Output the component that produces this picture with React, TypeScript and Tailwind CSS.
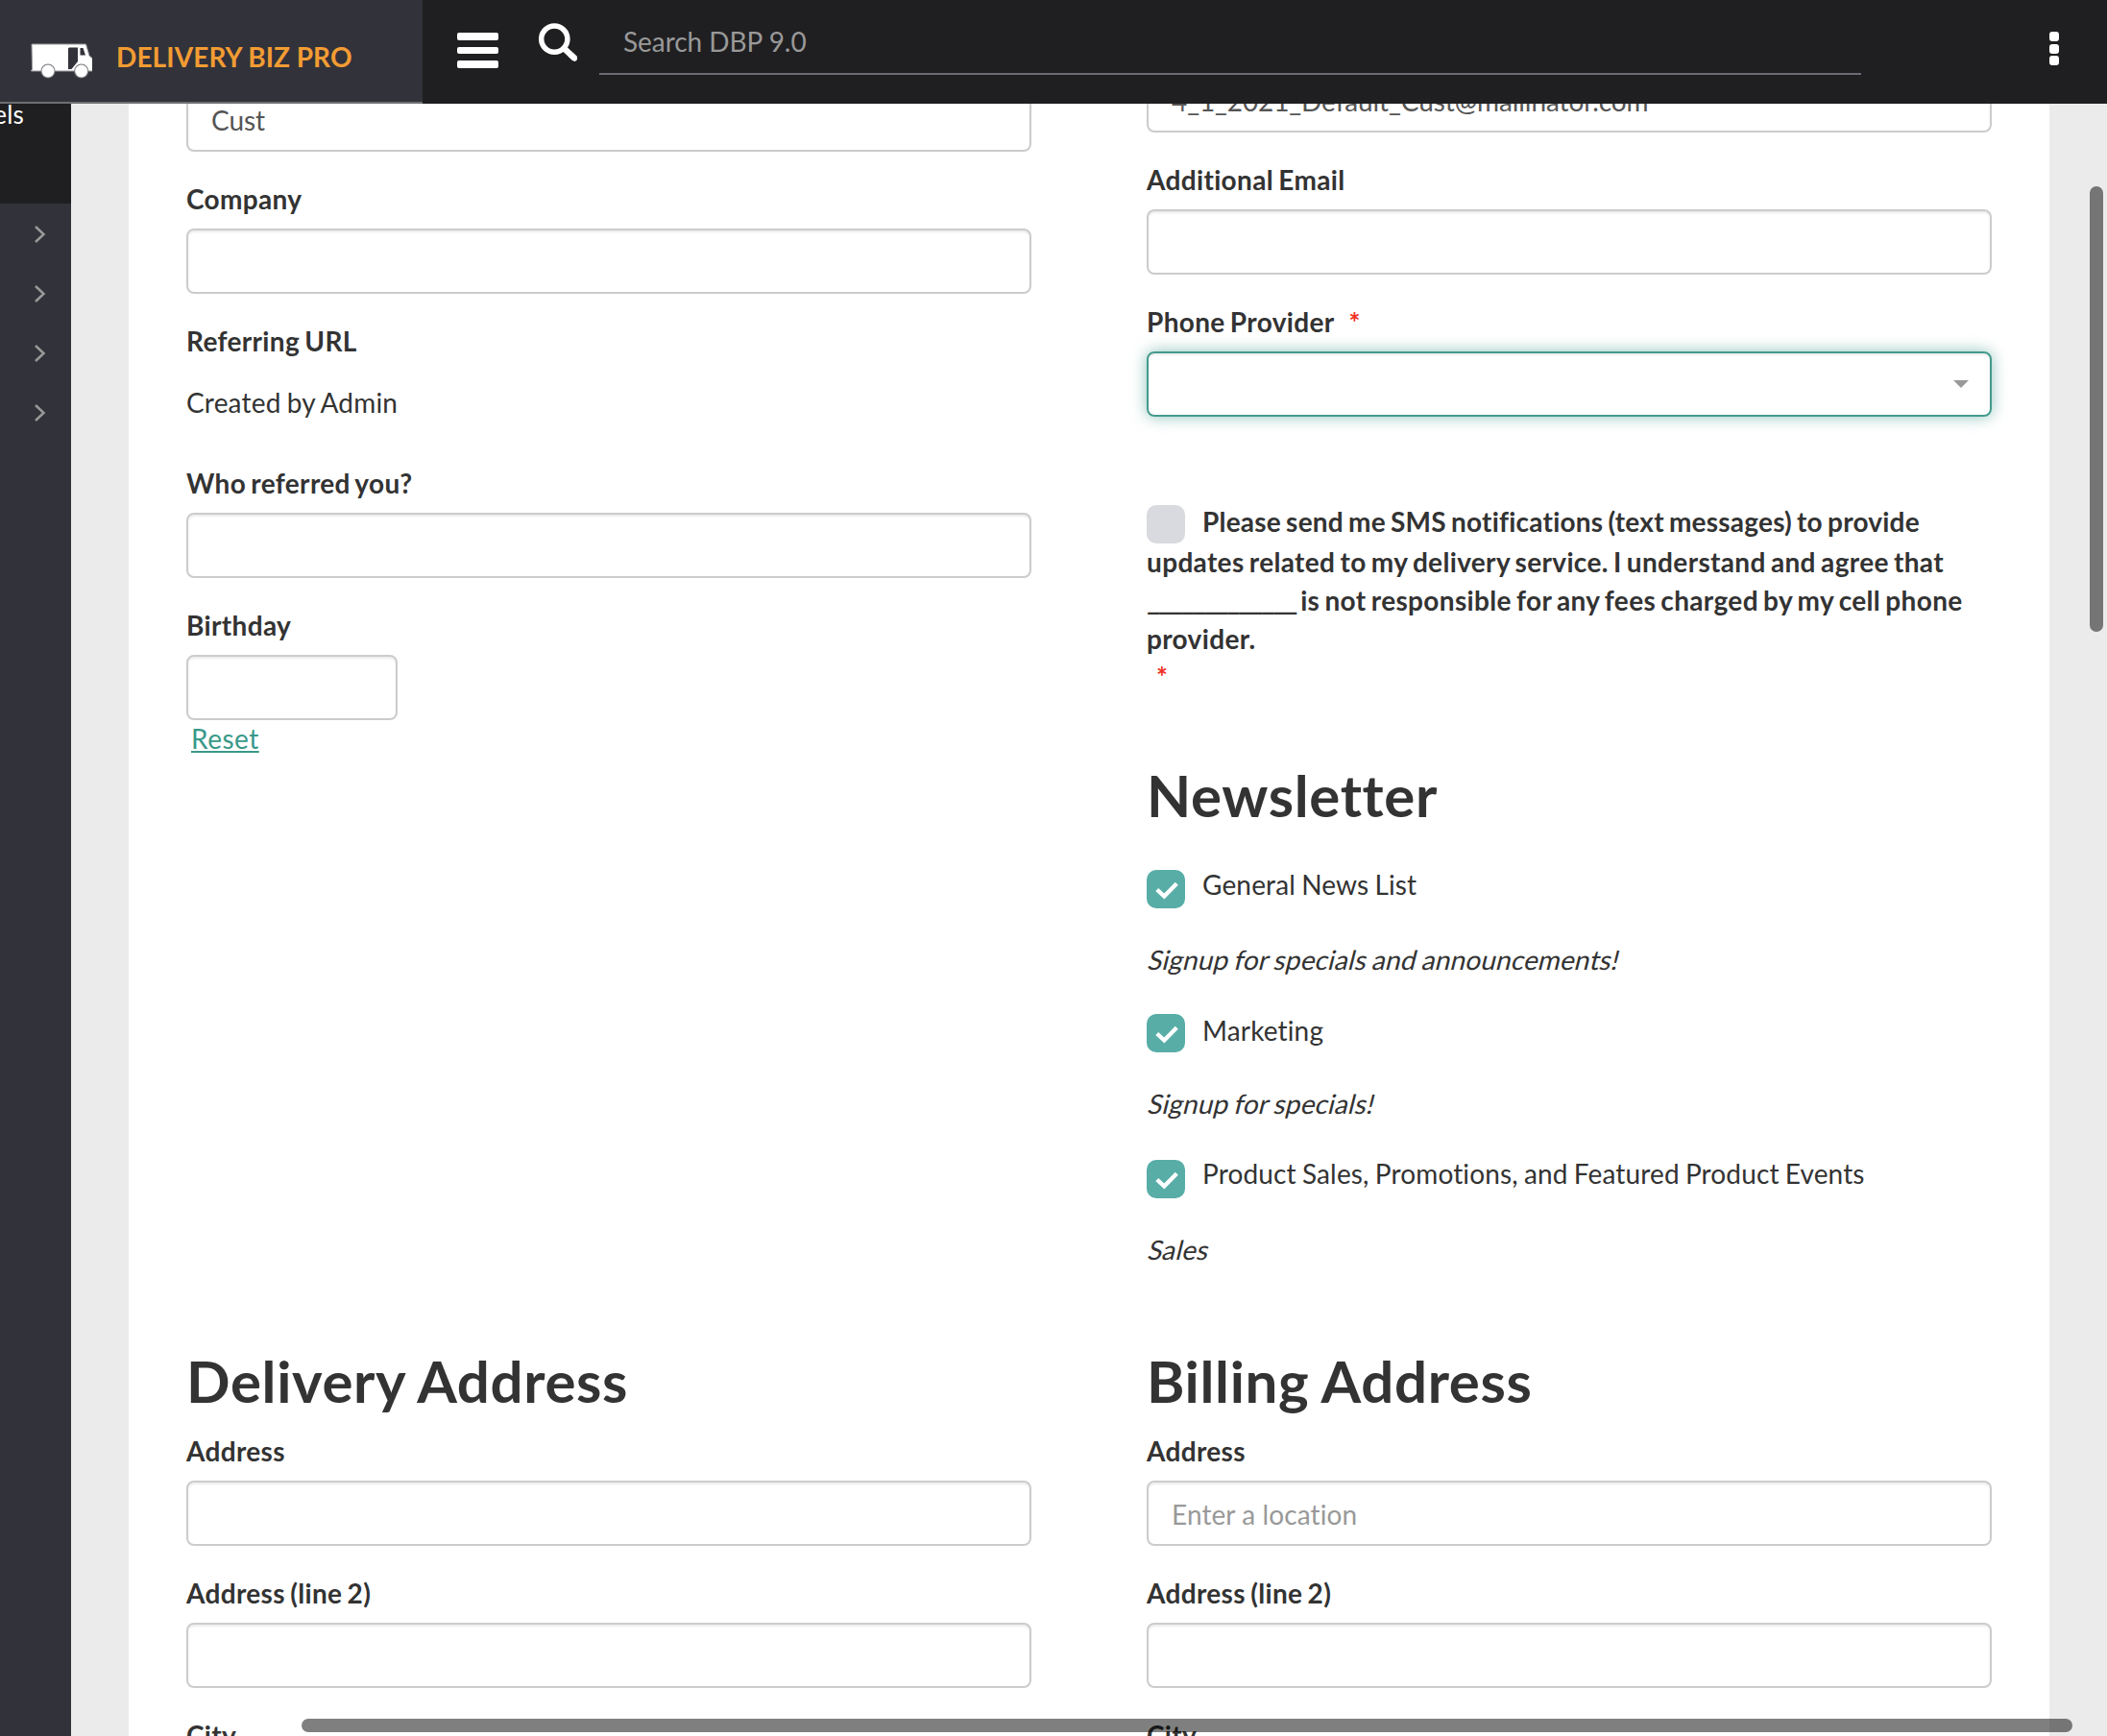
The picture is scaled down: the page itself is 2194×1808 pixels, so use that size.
import React from "react";

const inputBase =
  "block h-[68px] rounded-lg border-2 border-[#ccc] bg-white px-6 pt-[2px] text-[28px] leading-10 text-[#555] placeholder-[#999] shadow-[inset_0_2px_2px_rgba(0,0,0,0.075)] outline-none";

const bold = "font-bold tracking-[0.34px] [word-spacing:-1.9px]";

function Field({ label, value, placeholder, required, width = "w-full", children }: {
  label?: string; value?: string; placeholder?: string; required?: boolean; width?: string; children?: React.ReactNode;
}) {
  return (
    <div className="mb-[30px]">
      {label && (
        <label className={`mb-[10px] block h-10 leading-[38px] ${bold}`}>
          {label}
          {required && <span className="ml-[15px] text-[#f03024]">*</span>}
        </label>
      )}
      {children ?? (
        <input
          className={`${inputBase} ${width} ${value ? "tracking-[-0.1px]" : "tracking-[0.1px]"}`}
          defaultValue={value}
          placeholder={placeholder}
        />
      )}
    </div>
  );
}

function Box({ checked }: { checked?: boolean }) {
  return (
    <span className={`flex size-10 shrink-0 items-center justify-center rounded-[10px] ${checked ? "bg-[#58ada7]" : "bg-[#d9dadf]"}`}>
      {checked && (
        <svg className="size-10" viewBox="0 0 40 40" fill="none" stroke="#fff" strokeWidth="4.4">
          <path d="M10.8 20.5 L18.3 27.5 L31.3 14.3" />
        </svg>
      )}
    </span>
  );
}

function Subscription({ title, note, gap, lift }: { title: string; note: string; gap: string; lift: string }) {
  return (
    <div className={gap}>
      <div className="flex h-10 gap-[18px]">
        <Box checked />
        <span className={`tracking-[0.15px] ${lift}`}>{title}</span>
      </div>
      <p className="mt-[33px] h-[41px]">
        <span className="inline-block origin-[0_30px] -skew-x-[14deg] tracking-[0.12px]">{note}</span>
      </p>
    </div>
  );
}

function Heading({ children }: { children: React.ReactNode }) {
  return <h2 className="h-[66px] text-[60px] leading-[64px] font-bold tracking-[0.65px] [word-spacing:-1px]">{children}</h2>;
}

function Truck() {
  return (
    <svg className="h-[38px] w-16" viewBox="0 0 64 38">
      <path fill="#fff" stroke="#9a9aa0" strokeWidth="1" d="M1 1H57.5L61 13L64.5 16V29H0.5L1.5 27Z" />
      <path fill="#32323a" d="M39 5.5L40 4.5H49V19L42.500 27H39ZM51.500 5H54.500L57 12.500H51.500Z" />
      <circle cx="18" cy="29" r="7.6" fill="#77777d" />
      <circle cx="52.700" cy="29" r="7.6" fill="#77777d" />
      <circle cx="18" cy="29" r="6.5" fill="#fff" />
      <circle cx="52.700" cy="29" r="6.500" fill="#fff" />
    </svg>
  );
}

export default function App() {
  return (
    <div className="relative flex h-[1808px] w-[2194px] flex-col overflow-hidden bg-[#ebebeb] font-['Lato',sans-serif] text-[28px] leading-10 tracking-[0.2px] text-[#333] [font-variant-ligatures:none] [word-spacing:-1.2px]">
      <header className="z-10 flex h-[108px] shrink-0 bg-[#1f1f21]">
        <div className="flex w-[440px] items-start border-b-2 border-[#6f6f73] bg-[#32323a] pl-8">
          <div className="mt-[45px]"><Truck /></div>
          <span className="mt-[39px] ml-[25px] font-bold tracking-[0.1px] whitespace-nowrap text-[#f29c33] [word-spacing:-0.4px]">DELIVERY BIZ PRO</span>
        </div>
        <div className="mt-[34px] ml-9 flex w-[43px] flex-col gap-[7px]">
          <i className="h-[7.5px] rounded-[2px] bg-white" />
          <i className="h-[7.5px] rounded-[2px] bg-white" />
          <i className="h-[7.5px] rounded-[2px] bg-white" />
        </div>
        <svg className="mt-6 ml-[42px] h-10 w-10" viewBox="0 0 40 40" fill="none" stroke="#fff">
          <circle cx="16.3" cy="16.6" r="13.6" strokeWidth="5.5" />
          <path d="M26.500 26.500L37.500 37" strokeWidth="6.4" />
          <path d="M34 33.500L37.300 36.700" strokeWidth="6" strokeLinecap="round" />
        </svg>
        <input
          className="mt-[10px] ml-[23px] h-[68px] w-[1314px] border-b-2 border-[#6a6a74] bg-transparent px-[25px] text-[28px] tracking-[-0.05px] text-white placeholder-[#999] outline-none"
          placeholder="Search DBP 9.0"
        />
        <div className="mt-[33px] ml-[196px] flex flex-col gap-[2.5px]">
          <i className="size-[10px] rounded-[3px] bg-white" />
          <i className="size-[10px] rounded-[3px] bg-white" />
          <i className="size-[10px] rounded-[3px] bg-white" />
        </div>
      </header>

      <div className="flex h-[1700px]">
        <aside className="w-[74px] shrink-0 overflow-hidden bg-[#32323a]">
          <div className="flex h-[104px] justify-end bg-[#1f1f21] pr-[49px] text-[26px] leading-[22px] text-white">
            <span>Labels</span>
          </div>
          {[0, 1, 2, 3].map((i) => (
            <div key={i} className="flex h-[62px] items-center pt-[2px] pl-[35px]">
              <svg className="h-[18px] w-[14px]" viewBox="0 0 14 18" fill="none" stroke="#999" strokeWidth="2.5">
                <path d="M2 1L10.500 9L2 17" />
              </svg>
            </div>
          ))}
        </aside>

        <main className="ml-[60px] flex h-full w-[2000px] flex-col overflow-hidden bg-white px-[60px]">
          <div className="flex h-[1298px] shrink-0 gap-[120px]">
            <section className="-mt-[18px] w-[880px]">
              <Field value="Cust" />
              <Field label="Company" />
              <Field label="Referring URL">
                <p className="h-[68px] pt-[13px]">Created by Admin</p>
              </Field>
              <Field label="Who referred you?" />
              <Field label="Birthday" width="w-[220px]" />
              <a className="-mt-[31px] ml-[5px] block tracking-[0.5px] text-[#399889] underline decoration-2 underline-offset-2">Reset</a>
            </section>
            <section className="-mt-[38px] w-[880px]">
              <Field value="4_1_2021_Default_Cust@mailinator.com" />
              <Field label="Additional Email" />
              <Field label="Phone Provider" required>
                <div className="flex h-[68px] items-center justify-end rounded-lg border-2 border-[#439a8d] pr-[22px] shadow-[inset_0_2px_2px_rgba(0,0,0,0.075),0_0_16px_rgba(67,154,141,0.6)]">
                  <svg className="h-2 w-4" viewBox="0 0 16 8"><path d="M0 0H16L8 8Z" fill="#999" /></svg>
                </div>
              </Field>
              <div className={`mt-[92px] h-[150px] ${bold}`}>
                <div className="flex h-10 gap-[18px]">
                  <Box />
                  <span className="-mt-[3px] tracking-[0.22px]">Please send me SMS notifications (text messages) to provide</span>
                </div>
                <p className="-mt-px">
                  updates related to my delivery service. I understand and agree that
                  <br />
                  <span className="mr-[13.7px] inline-block origin-left scale-x-[1.098] tracking-[-2.2px]">_____________</span> is not responsible for any fees charged by my cell phone
                  <br />
                  provider.
                </p>
                <span className="-mt-px ml-[10px] block text-[#f03024]">*</span>
              </div>
              <div className="mt-[120px]"><Heading>Newsletter</Heading></div>
              <Subscription title="General News List" note="Signup for specials and announcements!" gap="mt-11" lift="-mt-[5px]" />
              <Subscription title="Marketing" note="Signup for specials!" gap="mt-9" lift="-mt-[3px]" />
              <Subscription title="Product Sales, Promotions, and Featured Product Events" note="Sales" gap="mt-[38px]" lift="-mt-[6px]" />
            </section>
          </div>
          <div className="flex gap-[120px]">
            {["Delivery Address", "Billing Address"].map((title, i) => (
              <section key={title} className="w-[880px]">
                <Heading>{title}</Heading>
                <div className="mt-5">
                  <Field label="Address" placeholder={i ? "Enter a location" : undefined} />
                  <Field label="Address (line 2)" />
                  <Field label="City" />
                </div>
              </section>
            ))}
          </div>
        </main>
      </div>

      <div className="absolute top-[194px] right-1 z-20 h-[464px] w-[14px] rounded-full bg-black/50" />
      <div className="absolute bottom-1 left-[314px] z-20 h-[14px] w-[1844px] rounded-full bg-black/50" />
    </div>
  );
}
